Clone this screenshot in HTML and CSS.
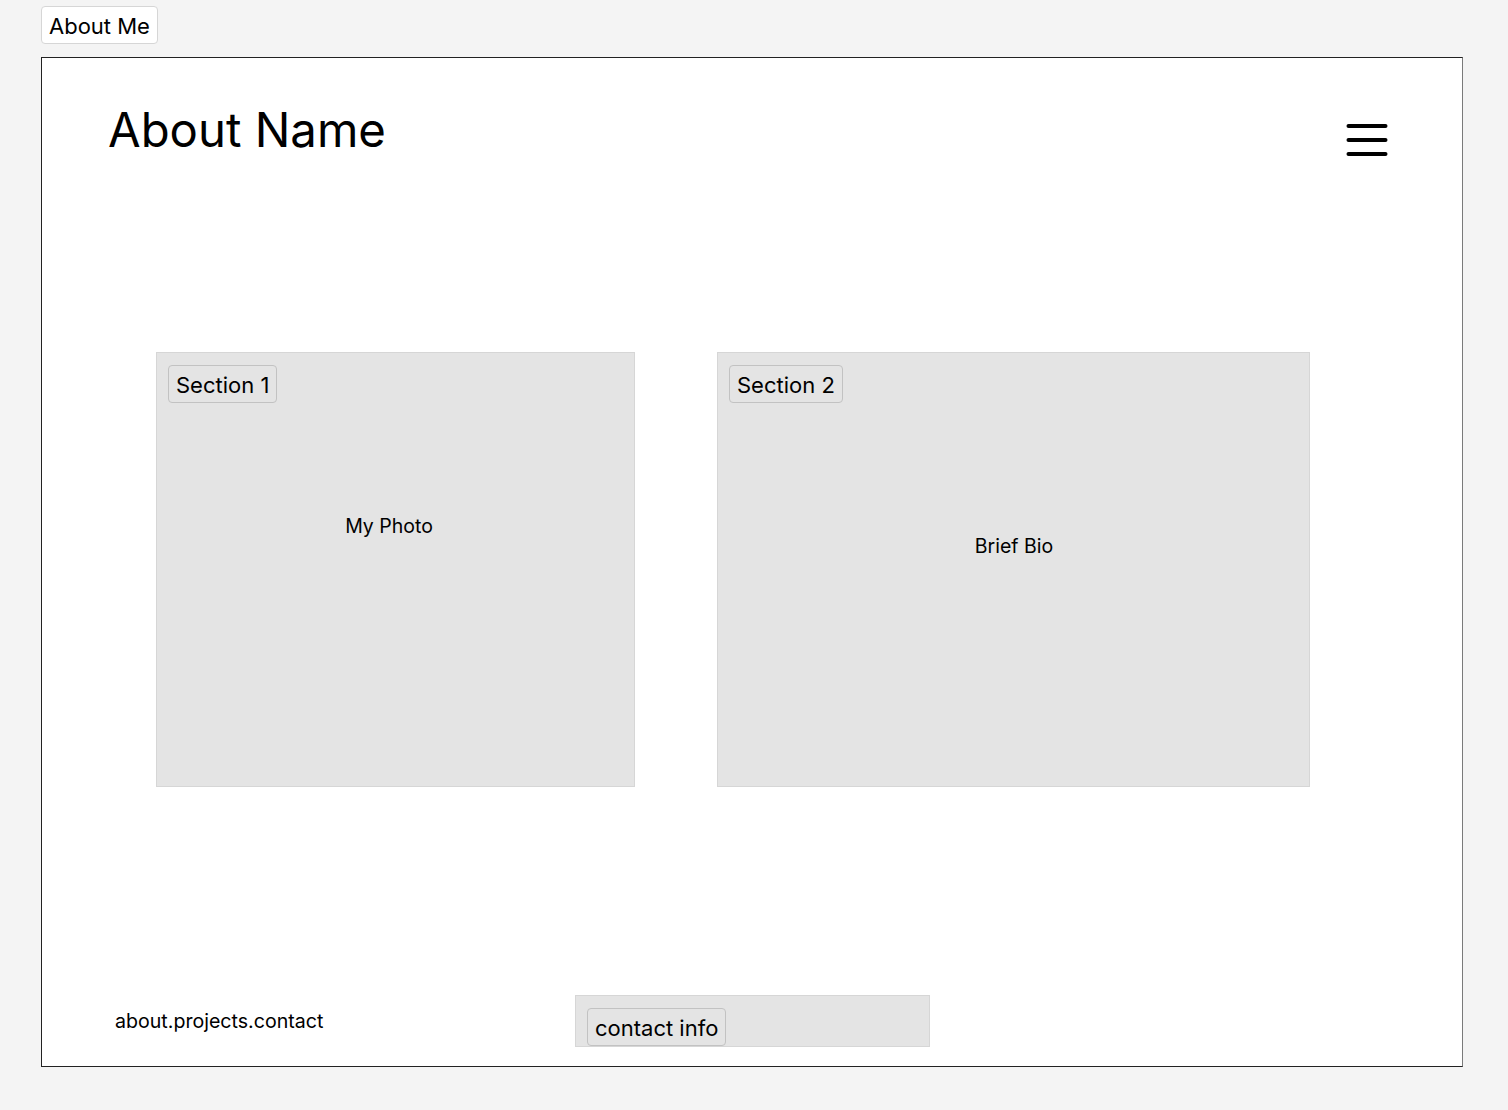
FILE: index.html
```html
<!DOCTYPE html>
<html>
<head>
<meta charset="utf-8">
<link rel="stylesheet" href="styles.css">
</head>
<body>
<div class="tag page-tag">About Me</div>
<div class="frame">
  <header class="header">
    <h1 class="title">About Name</h1>
    <svg class="menu" width="42" height="36" viewBox="0 0 42 36">
      <line x1="2.5" y1="4" x2="39.5" y2="4" stroke="#000" stroke-width="4" stroke-linecap="round"/>
      <line x1="2.5" y1="18" x2="39.5" y2="18" stroke="#000" stroke-width="4" stroke-linecap="round"/>
      <line x1="2.5" y1="32" x2="39.5" y2="32" stroke="#000" stroke-width="4" stroke-linecap="round"/>
    </svg>
  </header>
  <main class="sections">
    <section class="card card-1">
      <div class="tag card-tag">Section 1</div>
      <p class="card-text card-text-1">My Photo</p>
    </section>
    <section class="card card-2">
      <div class="tag card-tag">Section 2</div>
      <p class="card-text card-text-2">Brief Bio</p>
    </section>
  </main>
  <footer class="footer">
    <div class="nav">about.projects.contact</div>
    <div class="contact">
      <div class="tag contact-tag">contact info</div>
    </div>
  </footer>
</div>
</body>
</html>
```
FILE: styles.css
```css
html, body {
  margin: 0;
  padding: 0;
}
body {
  background: #f4f4f4;
  font-family: Inter, "Noto Sans", sans-serif;
  color: #000;
  padding: 6px 0 0 41px;
}
.tag {
  display: inline-block;
  box-sizing: border-box;
  height: 38px;
  line-height: 34px;
  padding: 2px 7px 0;
  font-size: 22px;
  border-radius: 4px;
}
.page-tag {
  background: #fff;
  border: 1px solid #d6d6d6;
}
.frame {
  margin-top: 13px;
  width: 1422px;
  height: 1010px;
  box-sizing: border-box;
  border: 1px solid #222;
  border-right-color: #7a7a7a;
  background: #fff;
  display: flex;
  flex-direction: column;
}
.header {
  display: flex;
  justify-content: space-between;
  align-items: flex-start;
  padding: 40px 74px 0 66px;
  height: 118px;
  box-sizing: content-box;
}
.title {
  margin: 0;
  padding-top: 3px;
  font-size: 47.3px;
  font-weight: 400;
  line-height: 58px;
}
.menu {
  margin-top: 24px;
  display: block;
}
.sections {
  display: flex;
  gap: 82px;
  padding-left: 114px;
  margin-top: 136px;
}
.card {
  box-sizing: border-box;
  height: 435px;
  background: #e4e4e4;
  border: 1px solid #d6d6d6;
  padding: 12px 0 0 11px;
}
.card-1 { width: 479px; }
.card-2 { width: 593px; }
.card-tag {
  background: #e4e4e4;
  border: 1px solid #c2c2c2;
}
.card-text {
  margin: 0;
  font-size: 19.5px;
  line-height: 24px;
  text-align: center;
}
.card-text-1 {
  margin-top: 111px;
  padding-right: 24px;
}
.card-text-2 {
  margin-top: 131px;
  padding-right: 10px;
}
.footer {
  margin-top: auto;
  margin-bottom: 19px;
  display: flex;
  align-items: center;
  padding-left: 73px;
}
.nav {
  width: 460px;
  font-size: 19.6px;
  line-height: 24px;
}
.contact {
  box-sizing: border-box;
  width: 355px;
  height: 52px;
  background: #e4e4e4;
  border: 1px solid #d6d6d6;
  padding: 12px 0 0 11px;
}
.contact-tag {
  border: 1px solid #c2c2c2;
  background: #e4e4e4;
}
```
